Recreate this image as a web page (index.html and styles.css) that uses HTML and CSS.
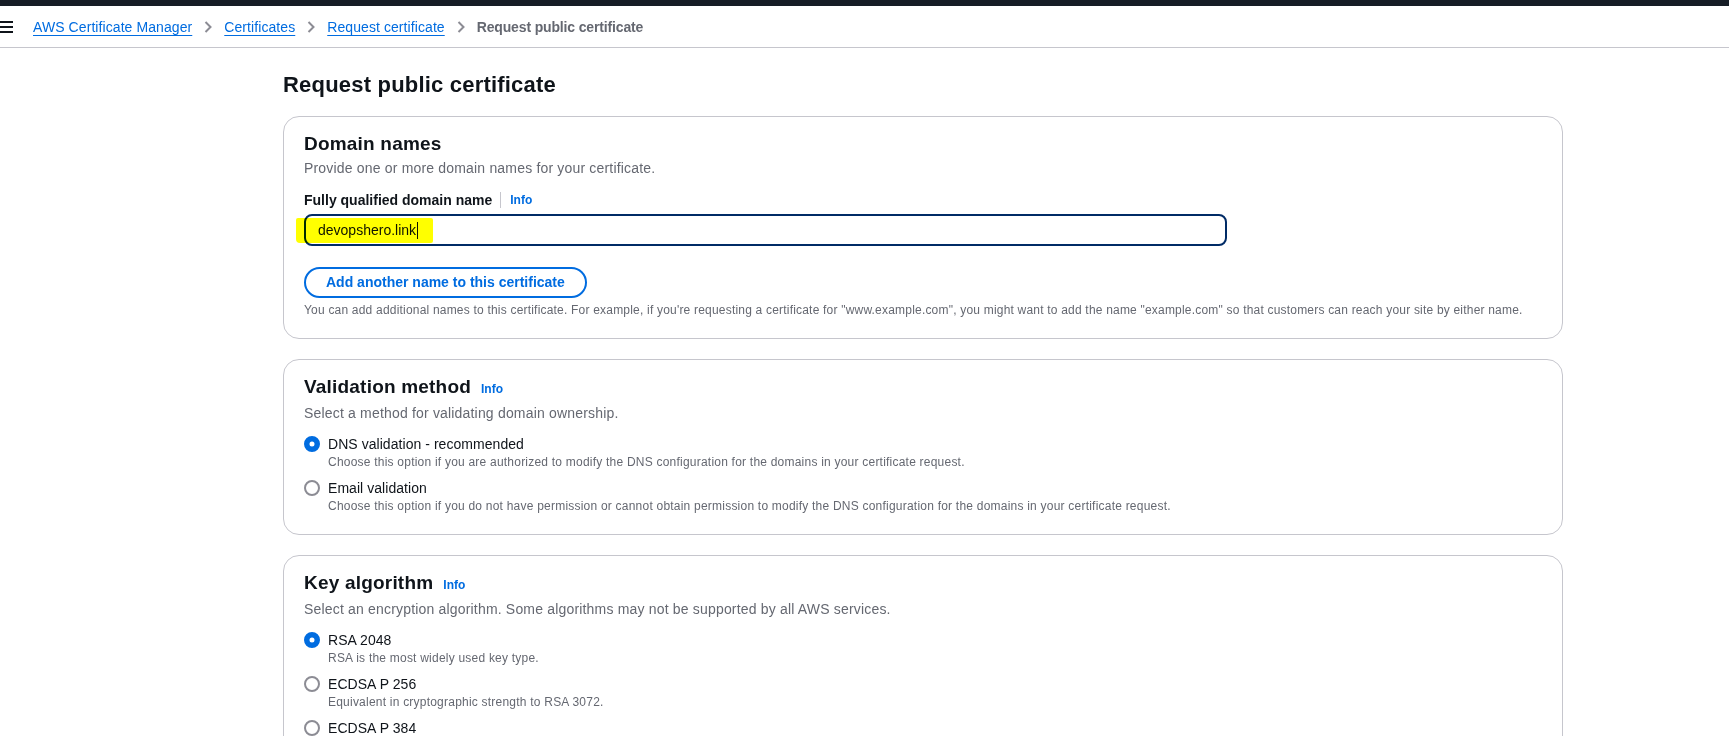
FILE: index.html
```html
<!DOCTYPE html>
<html lang="en">
<head>
<meta charset="utf-8">
<title>Request public certificate</title>
<link rel="stylesheet" href="styles.css">
</head>
<body>
<div class="topbar"></div>
<nav class="crumbs">
  <svg class="menu-icon" viewBox="0 0 13 12" aria-hidden="true"><path d="M0 1H13M0 6H13M0 11H13" stroke="#0f141a" stroke-width="2" fill="none"/></svg>
  <a class="crumb-link" href="#">AWS Certificate Manager</a>
  <svg class="chev" viewBox="0 0 8 12" aria-hidden="true"><path d="M1.5 1L6.5 6L1.5 11" stroke="#8c8c94" stroke-width="2" fill="none"/></svg>
  <a class="crumb-link" href="#">Certificates</a>
  <svg class="chev" viewBox="0 0 8 12" aria-hidden="true"><path d="M1.5 1L6.5 6L1.5 11" stroke="#8c8c94" stroke-width="2" fill="none"/></svg>
  <a class="crumb-link" href="#">Request certificate</a>
  <svg class="chev" viewBox="0 0 8 12" aria-hidden="true"><path d="M1.5 1L6.5 6L1.5 11" stroke="#8c8c94" stroke-width="2" fill="none"/></svg>
  <span class="crumb-current">Request public certificate</span>
</nav>
<div class="layout">
  <main class="content">
    <h1 class="page-title">Request public certificate</h1>

    <section class="panel">
      <header>
        <h2 class="panel-title">Domain names</h2>
        <p class="panel-desc">Provide one or more domain names for your certificate.</p>
      </header>
      <div class="field">
        <div class="field-label"><span>Fully qualified domain name</span><span class="label-divider"></span><a class="info" href="#">Info</a></div>
        <div class="input-wrap">
          <div class="input"><span>devopshero.link</span><span class="caret"></span></div>
          <span class="highlight"></span>
        </div>
        <button class="btn" type="button">Add another name to this certificate</button>
        <p class="constraint">You can add additional names to this certificate. For example, if you're requesting a certificate for "www.example.com", you might want to add the name "example.com" so that customers can reach your site by either name.</p>
      </div>
    </section>

    <section class="panel">
      <header>
        <h2 class="panel-title">Validation method<a class="info heading-info" href="#">Info</a></h2>
        <p class="panel-desc">Select a method for validating domain ownership.</p>
      </header>
      <div class="options">
        <div class="option">
          <svg class="radio-icon" viewBox="0 0 16 16" aria-hidden="true"><circle cx="8" cy="8" r="5.25" fill="#fff" stroke="#006ce0" stroke-width="5.5"/></svg>
          <div><div class="option-label">DNS validation - recommended</div><div class="option-desc">Choose this option if you are authorized to modify the DNS configuration for the domains in your certificate request.</div></div>
        </div>
        <div class="option">
          <svg class="radio-icon" viewBox="0 0 16 16" aria-hidden="true"><circle cx="8" cy="8" r="7" fill="#fff" stroke="#8c8c94" stroke-width="2"/></svg>
          <div><div class="option-label">Email validation</div><div class="option-desc">Choose this option if you do not have permission or cannot obtain permission to modify the DNS configuration for the domains in your certificate request.</div></div>
        </div>
      </div>
    </section>

    <section class="panel">
      <header>
        <h2 class="panel-title">Key algorithm<a class="info heading-info" href="#">Info</a></h2>
        <p class="panel-desc">Select an encryption algorithm. Some algorithms may not be supported by all AWS services.</p>
      </header>
      <div class="options">
        <div class="option">
          <svg class="radio-icon" viewBox="0 0 16 16" aria-hidden="true"><circle cx="8" cy="8" r="5.25" fill="#fff" stroke="#006ce0" stroke-width="5.5"/></svg>
          <div><div class="option-label">RSA 2048</div><div class="option-desc">RSA is the most widely used key type.</div></div>
        </div>
        <div class="option">
          <svg class="radio-icon" viewBox="0 0 16 16" aria-hidden="true"><circle cx="8" cy="8" r="7" fill="#fff" stroke="#8c8c94" stroke-width="2"/></svg>
          <div><div class="option-label">ECDSA P 256</div><div class="option-desc">Equivalent in cryptographic strength to RSA 3072.</div></div>
        </div>
        <div class="option">
          <svg class="radio-icon" viewBox="0 0 16 16" aria-hidden="true"><circle cx="8" cy="8" r="7" fill="#fff" stroke="#8c8c94" stroke-width="2"/></svg>
          <div><div class="option-label">ECDSA P 384</div></div>
        </div>
      </div>
    </section>
  </main>
</div>
</body>
</html>
```
FILE: styles.css
```css
html, body {
  margin: 0;
  padding: 0;
}

body {
  font-family: "Liberation Sans", Arial, sans-serif;
  font-size: 14px;
  line-height: 20px;
  color: #0f141a;
  background: #ffffff;
}

.topbar {
  height: 6px;
  background: #161d26;
}

.crumbs {
  display: flex;
  align-items: center;
  padding: 11px 0 10px;
  border-bottom: 1px solid #c6c6cd;
}

.menu-icon {
  display: block;
  width: 13px;
  height: 12px;
  margin-right: 20px;
  flex: none;
}

.crumb-link {
  color: #006ce0;
  letter-spacing: 0.08px;
  text-decoration: underline;
  text-decoration-thickness: 1px;
  text-underline-offset: 3px;
}

.chev {
  display: block;
  width: 8px;
  height: 12px;
  margin: 0 12px;
  flex: none;
}

.crumb-current {
  font-weight: 700;
  color: #656871;
  letter-spacing: -0.15px;
}

.layout {
  display: grid;
  grid-template-columns: 283px minmax(0, 1280px) 1fr;
}

.content {
  grid-column: 2;
  min-width: 0;
}

.page-title {
  margin: 22px 0 16px;
  font-size: 22px;
  line-height: 30px;
  font-weight: 700;
  letter-spacing: 0.2px;
}

.panel {
  border: 1px solid #c6c6cd;
  border-radius: 16px;
  padding: 15px 20px 20px;
  margin-bottom: 20px;
}

.panel-title {
  margin: 0;
  font-size: 19px;
  line-height: 24px;
  font-weight: 700;
  letter-spacing: 0.2px;
}

.panel-desc {
  margin: 2px 0 0;
  color: #656871;
  letter-spacing: 0.18px;
}

.info {
  font-size: 12px;
  font-weight: 700;
  color: #006ce0;
  text-decoration: none;
  letter-spacing: 0;
}

.heading-info {
  margin-left: 10px;
}

.field {
  margin-top: 12px;
}

.field-label {
  display: flex;
  align-items: center;
  font-weight: 700;
}

.label-divider {
  width: 1px;
  height: 16px;
  background: #c6c6cd;
  margin: 0 9px 0 8px;
}

.input-wrap {
  position: relative;
  width: 923px;
  margin-top: 4px;
}

.input {
  box-sizing: border-box;
  height: 32px;
  display: flex;
  align-items: center;
  padding: 0 12px;
  border: 2px solid #002b66;
  border-radius: 8px;
  background: #ffffff;
}

.caret {
  width: 1px;
  height: 17px;
  margin-left: 1px;
  background: #0f141a;
}

.highlight {
  position: absolute;
  left: -8px;
  top: 4px;
  width: 137px;
  height: 25px;
  background: #ffff00;
  mix-blend-mode: multiply;
  border-radius: 2px 2px 2px 4px;
}

.btn {
  display: block;
  box-sizing: border-box;
  height: 31px;
  margin-top: 21px;
  padding: 0 20px;
  border: 2px solid #006ce0;
  border-radius: 20px;
  background: #ffffff;
  color: #006ce0;
  font-family: inherit;
  font-size: 14px;
  font-weight: 700;
  line-height: 27px;
}

.constraint {
  margin: 4px 0 0;
  font-size: 12px;
  line-height: 16px;
  color: #656871;
  letter-spacing: 0.2px;
}

.options {
  margin-top: 11px;
  display: flex;
  flex-direction: column;
  gap: 8px;
}

.option {
  display: flex;
  gap: 8px;
}

.radio-icon {
  display: block;
  width: 16px;
  height: 16px;
  margin-top: 2px;
  flex: none;
}

.option-label {
  line-height: 20px;
  letter-spacing: 0.05px;
}

.option-desc {
  font-size: 12px;
  line-height: 16px;
  color: #656871;
  letter-spacing: 0.22px;
}
```
